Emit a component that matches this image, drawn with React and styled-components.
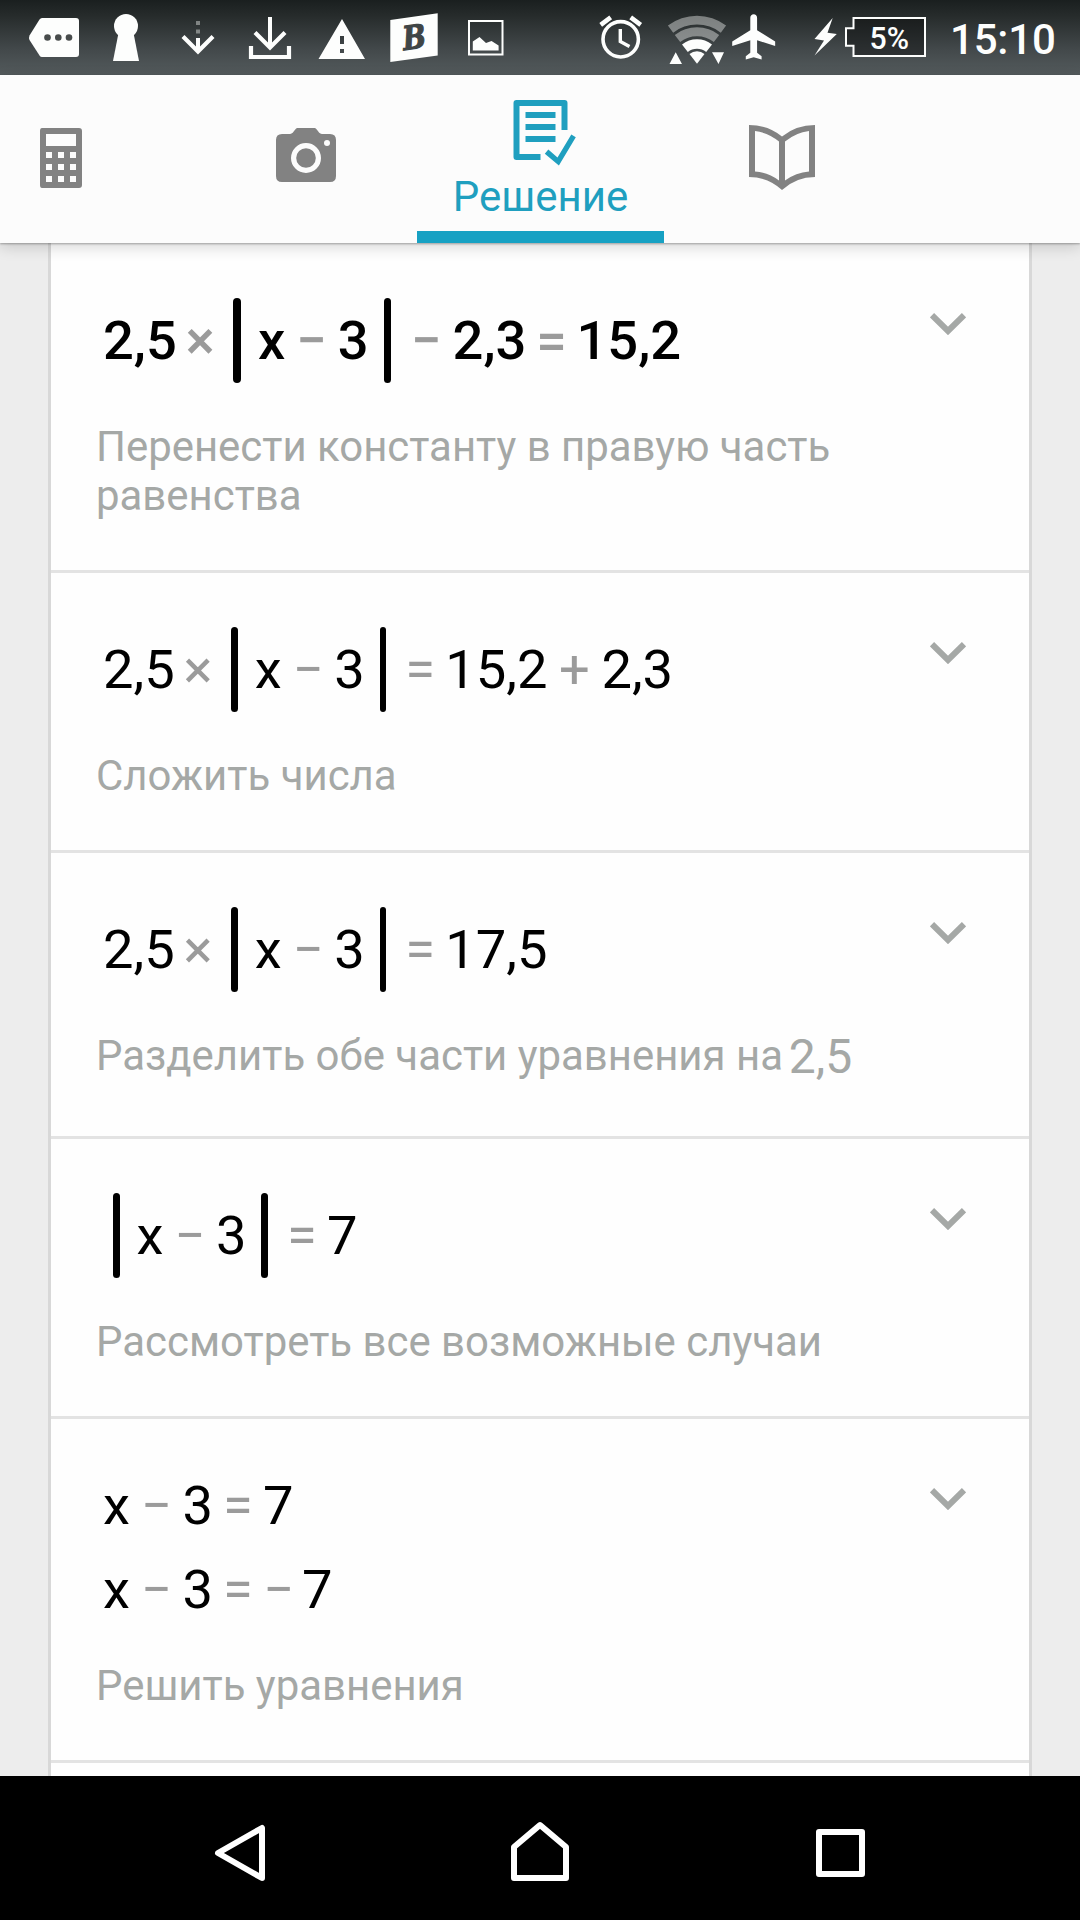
import React from 'react';
import styled, { createGlobalStyle } from 'styled-components';

const GlobalStyle = createGlobalStyle`
  * {
    box-sizing: border-box;
  }

  body {
    margin: 0;
    font-family: Roboto, sans-serif;
    background: #ededed;
  }
`;

const Screen = styled.div`
  display: flex;
  flex-direction: column;
  width: 1080px;
  height: 1920px;
  overflow: hidden;
  background: #ededed;
`;

const StatusBar = styled.header`
  flex: none;
  display: flex;
  justify-content: space-between;
  height: 75px;
  padding: 0 24px 0 18px;
  background: linear-gradient(#1a1f1f 0%, #272c2c 22%, #42484a 65%, #545b5d 100%);
`;

const StatusGroup = styled.div`
  display: flex;
  align-items: center;
`;

const StatusIcon = styled.svg`
  flex: none;
  display: block;
  width: ${({ $width }) => $width || 72}px;
  height: 75px;
  margin-left: ${({ $gap }) => $gap || 0}px;
  fill: #fdfefd;
`;

const BatteryLevel = styled.text`
  font: 500 31.5px Roboto, sans-serif;
`;

const LogoLetter = styled.text`
  font: bold 33px 'DejaVu Serif', serif;
  fill: #3f4546;
  stroke: #3f4546;
  stroke-width: 1.2;
`;

const Clock = styled.div`
  width: 106px;
  margin-left: 21px;
  padding-top: 5px;
  color: #fdfefd;
  font-size: 42px;
  font-weight: 500;
  line-height: 50px;
  letter-spacing: -0.2px;
  white-space: nowrap;
`;

const TabBar = styled.nav`
  position: relative;
  z-index: 1;
  flex: none;
  display: flex;
  height: 168px;
  background: #fcfcfc;
  box-shadow: 0 1px 2px rgba(0, 0, 0, 0.3), 0 4px 14px rgba(0, 0, 0, 0.16);
`;

const Tab = styled.div`
  display: flex;
  flex-direction: column;
  align-items: center;
  width: ${({ $width }) => $width}px;
  margin-left: ${({ $gap }) => $gap || 0}px;
  padding-top: ${({ $active }) => ($active ? 22 : 47)}px;
  border-bottom: 12px solid ${({ $active }) => ($active ? '#17a1c3' : 'transparent')};
  color: ${({ $active }) => ($active ? '#1f9fbf' : '#828282')};
`;

const TabIcon = styled.svg`
  display: block;
  width: 72px;
  height: 72px;
  fill: currentColor;
`;

const TabLabel = styled.span`
  margin-top: 3px;
  font-size: 42px;
  line-height: 49px;
`;

const Steps = styled.main`
  flex: 1;
  min-height: 0;
  overflow: hidden;
  margin: 0 48px;
  padding-top: 1px;
  border: solid #d8d8d8;
  border-width: 0 3px;
  background: #fefefe;
`;

const Step = styled.section`
  display: flex;
  justify-content: space-between;
  padding: 54px 63px 50px 45px;
  border-bottom: 3px solid #e3e3e3;
`;

const StepBody = styled.div`
  width: 800px;
`;

const Equations = styled.div`
  display: flex;
  flex-direction: column;
  gap: 19px;
  padding-left: 7px;
`;

const Equation = styled.div`
  display: flex;
  align-items: center;
  height: ${({ $tall }) => ($tall ? 85 : 65)}px;
  color: #000;
  font-size: 54.3px;
  font-weight: ${({ $strong }) => ($strong ? 500 : 400)};
  line-height: 65px;
  white-space: pre;
`;

const opWidths = { '×': 46.5, '−': 52.5, '=': 50, '+': 54 };

const Operator = styled.span`
  width: ${({ $unary, children }) => ($unary ? 29 : opWidths[children])}px;
  margin-right: ${({ $unary }) => ($unary ? 10 : 0)}px;
  color: #9b9b9b;
  text-align: center;
`;

const AbsBar = styled.span`
  width: ${({ $strong }) => ($strong ? 7.5 : 6.5)}px;
  height: 85px;
  margin: ${({ $close }) => ($close ? '0 9px 0 15px' : '0 17px 0 10px')};
  border-radius: 4px;
  background: #000;
`;

const Description = styled.p`
  min-height: ${({ $minHeight }) => $minHeight || 49}px;
  margin: 39px 0 0;
  color: #a5a8a6;
  font-size: 41.93px;
  line-height: 49px;
`;

const InlineNumber = styled.span`
  position: relative;
  top: 3px;
  margin-left: -4.5px;
  font-size: 48px;
  line-height: 40px;
`;

const Chevron = styled.svg`
  flex: none;
  width: 36px;
  height: 22px;
  margin-top: 15px;
  fill: none;
  stroke: #a5a8a6;
  stroke-width: 6;
`;

const NavBar = styled.footer`
  flex: none;
  display: flex;
  justify-content: space-around;
  height: 144px;
  padding: 45px 90px 0;
  background: #000;
`;

const NavIcon = styled.svg`
  width: 64px;
  height: 64px;
  fill: none;
  stroke: #fff;
  stroke-width: 6;
  stroke-linejoin: round;
`;

const steps = [
  {
    strong: true,
    lines: ['2,5 × [ x − 3 ] − 2,3 = 15,2'],
    text: 'Перенести константу в правую часть равенства',
  },
  { lines: ['2,5 × [ x − 3 ] = 15,2 + 2,3'], text: 'Сложить числа' },
  {
    lines: ['2,5 × [ x − 3 ] = 17,5'],
    text: 'Разделить обе части уравнения на ',
    number: '2,5',
    minHeight: 55,
  },
  { lines: ['[ x − 3 ] = 7'], text: 'Рассмотреть все возможные случаи' },
  { lines: ['x − 3 = 7', 'x − 3 = − 7'], text: 'Решить уравнения' },
];

// Square brackets in the source mark the opening and closing modulus bars
const MathLine = ({ source, strong }) => {
  const tokens = source.split(' ');

  return (
    <Equation $strong={strong} $tall={source.includes('[')}>
      {tokens.map((token, i) => {
        if (token === '[' || token === ']') {
          return <AbsBar key={i} $strong={strong} $close={token === ']'} />;
        }
        if (opWidths[token]) {
          return <Operator key={i} $unary={tokens[i - 1] === '='}>{token}</Operator>;
        }
        return <span key={i}>{token}</span>;
      })}
    </Equation>
  );
};

const NotificationIcons = () => (
  <StatusGroup>
    <StatusIcon viewBox="0 0 72 75">
      <path d="M24 18H58Q61 18 61 21V54Q61 57 58 57H24Q22.500 57 21.500 55.500L11.500 40Q10.500 37.700 11.500 35.500L21.500 19.500Q22.500 18 24 18Z" />
      <g fill="#484c4c">
        <circle cx="29.500" cy="37.500" r="3.300" />
        <circle cx="40.300" cy="37.500" r="3.300" />
        <circle cx="51" cy="37.500" r="3.300" />
      </g>
    </StatusIcon>
    <StatusIcon viewBox="0 0 72 75">
      <circle cx="36" cy="26" r="12" />
      <path d="M28.500 33H43.500L49 61H23Z" />
    </StatusIcon>
    <StatusIcon viewBox="0 0 72 75">
      <path d="M34 21h4v4h-4zM34 29.500h4v4h-4z" opacity="0.4" />
      <path d="M34 38h4v11h-4z" />
      <path d="M21 36.500L36 51.500L51 36.500" fill="none" stroke="#fdfefd" strokeWidth="4.200" />
    </StatusIcon>
    <StatusIcon viewBox="0 0 72 75">
      <path d="M34 17h4v31h-4z" />
      <path d="M21 32.500L36 47.500L51 32.500M17 46V57H55V46" fill="none" stroke="#fdfefd" strokeWidth="4.200" />
    </StatusIcon>
    <StatusIcon viewBox="0 0 72 75">
      <path fillRule="evenodd" d="M36 19L59 59H12.500ZM34 36V44H38V36ZM34 49V53H38V49Z" />
    </StatusIcon>
    <StatusIcon viewBox="0 0 72 75">
      <path d="M12.300 20L59.700 13.300V55.500L12.300 62Z" />
      <LogoLetter transform="translate(24 50.500) skewY(-8) skewX(-3)" textLength="23" lengthAdjust="spacingAndGlyphs">B</LogoLetter>
    </StatusIcon>
    <StatusIcon viewBox="0 0 72 75">
      <rect x="19" y="21" width="33.500" height="33.500" fill="none" stroke="#fdfefd" strokeWidth="2" />
      <path d="M22.800 41.500L29.500 37L36 43L41.500 41L48.600 45.500V50.500H22.800Z" />
    </StatusIcon>
  </StatusGroup>
);

const SystemIcons = () => (
  <StatusGroup>
    <StatusIcon viewBox="0 0 72 75">
      <g fill="none" stroke="#fdfefd">
        <circle cx="35.700" cy="39.300" r="17.700" strokeWidth="3.600" />
        <path d="M35.300 29V41.500L44.500 46.500" strokeWidth="3.400" />
        <path d="M15.700 24.800L25.700 17.300M45.700 17.300L55.700 24.800" strokeWidth="4.600" />
      </g>
    </StatusIcon>
    <StatusIcon viewBox="0 0 72 75">
      <g opacity="0.4">
        <path d="M10.900 25.500A48 48 0 0 1 69.100 25.500L63.800 32.700A38.700 38.700 0 0 0 16.200 32.700Z" />
        <path d="M17.800 34.900A36.500 36.500 0 0 1 62.200 34.900L56.800 42.100A27 27 0 0 0 23.200 42.100Z" />
      </g>
      <path d="M25 44.500A24 24 0 0 1 55 44.500L49.200 52A14.700 14.700 0 0 0 30.800 52Z" />
      <path d="M32.500 54A12 12 0 0 1 47.500 54L40 63.700Z" />
      <path d="M12.500 64L18.700 52.300L25 64ZM55 52.300H67L61.500 64Z" />
    </StatusIcon>
    <StatusIcon $width={50} viewBox="0 0 50 75">
      <path
        transform="translate(-1.300 9.800) scale(2.260)"
        d="M21 16v-2l-8-5V3.500c0-.830-.670-1.500-1.500-1.500S10 2.670 10 3.500V9l-8 5v2l8-2.500V19l-2 1.500V22l3.500-1 3.500 1v-1.500L13 19v-5.500l8 2.500z"
      />
    </StatusIcon>
    <StatusIcon $width={32} $gap={30} viewBox="0 0 32 75">
      <path d="M23.700 18L5.500 39L15 40.500L5.500 55.500L27.800 34L18.500 32.700Z" />
    </StatusIcon>
    <StatusIcon $width={88} viewBox="0 0 88 75">
      <path d="M12.500 18H84V56H12.500V45.700H5V28.200H12.500Z" fill="#000" fillOpacity="0.350" stroke="#fdfefd" strokeWidth="2" />
      <BatteryLevel x="28.500" y="48.500" textLength="39.500" lengthAdjust="spacingAndGlyphs">5%</BatteryLevel>
    </StatusIcon>
    <Clock>15:10</Clock>
  </StatusGroup>
);

const Tabs = () => (
  <TabBar>
    <Tab $width={122}>
      <TabIcon viewBox="0 0 72 72">
        <path
          fillRule="evenodd"
          d="M17 6H54Q57 6 57 9V63Q57 66 54 66H17Q15 66 15 63V9Q15 6 17 6ZM21 12V24H51V12ZM21 30v6h6v-6zM33 30v6h6v-6zM45 30v6h6v-6zM21 42v6h6v-6zM33 42v6h6v-6zM45 42v6h6v-6zM21 54v6h6v-6zM33 54v6h6v-6zM45 54v6h6v-6z"
        />
      </TabIcon>
    </Tab>
    <Tab $width={222} $gap={73}>
      <TabIcon viewBox="0 0 72 72">
        <path d="M27 6H45C48 8 49 12 52 12H60Q66 12 66 18V54Q66 60 60 60H12Q6 60 6 54V18Q6 12 12 12H20C23 12 24 8 27 6Z" />
        <circle cx="36" cy="36" r="12.400" fill="none" stroke="#fcfcfc" strokeWidth="5.200" />
        <circle cx="57" cy="21" r="3" fill="#fcfcfc" />
      </TabIcon>
    </Tab>
    <Tab $width={247} $active>
      <TabIcon viewBox="504.500 97 72 72">
        <path d="M540 157H516V103H564V130" fill="none" stroke="currentColor" strokeWidth="6" strokeLinejoin="round" />
        <path d="M525 112h30v6h-30zM525 124h30v6h-30zM525 136h30v6h-30z" />
        <path d="M558.400 165.500L544.300 153.700L547.800 149.500L557 157.500L570.800 134.500L575.300 137.300Z" />
      </TabIcon>
      <TabLabel>Решение</TabLabel>
    </Tab>
    <Tab $width={236}>
      <TabIcon viewBox="746 122 72 72">
        <path
          fillRule="evenodd"
          d="M749 125Q768 125 782 136.500Q796 125 815 125V177Q796 177 782 190Q768 177 749 177ZM755 131V171.500Q768 172.500 779 180.500V141.500Q768 132.500 755 131ZM809 131Q796 132.500 785 141.500V180.500Q796 172.500 809 171.500Z"
        />
      </TabIcon>
    </Tab>
  </TabBar>
);

const App = () => {
  return (
    <>
      <GlobalStyle />
      <Screen>
        <StatusBar>
          <NotificationIcons />
          <SystemIcons />
        </StatusBar>
        <Tabs />
        <Steps>
          {steps.map(({ strong, lines, text, number, minHeight }) => (
            <Step key={text}>
              <StepBody>
                <Equations>
                  {lines.map((line) => (
                    <MathLine key={line} source={line} strong={strong} />
                  ))}
                </Equations>
                <Description $minHeight={minHeight}>
                  {text}
                  {number && <InlineNumber>{number}</InlineNumber>}
                </Description>
              </StepBody>
              <Chevron viewBox="0 0 36 22">
                <path d="M2 2.200L18 18L34 2.200" />
              </Chevron>
            </Step>
          ))}
        </Steps>
        <NavBar>
          <NavIcon viewBox="208 1821 64 64">
            <path d="M262 1828V1878L218 1853Z" />
          </NavIcon>
          <NavIcon viewBox="508 1821 64 64">
            <path d="M514 1878V1847L540 1825L566 1847V1878Z" />
          </NavIcon>
          <NavIcon viewBox="808 1821 64 64">
            <path d="M819 1832H862V1874H819Z" />
          </NavIcon>
        </NavBar>
      </Screen>
    </>
  );
};

export default App;
